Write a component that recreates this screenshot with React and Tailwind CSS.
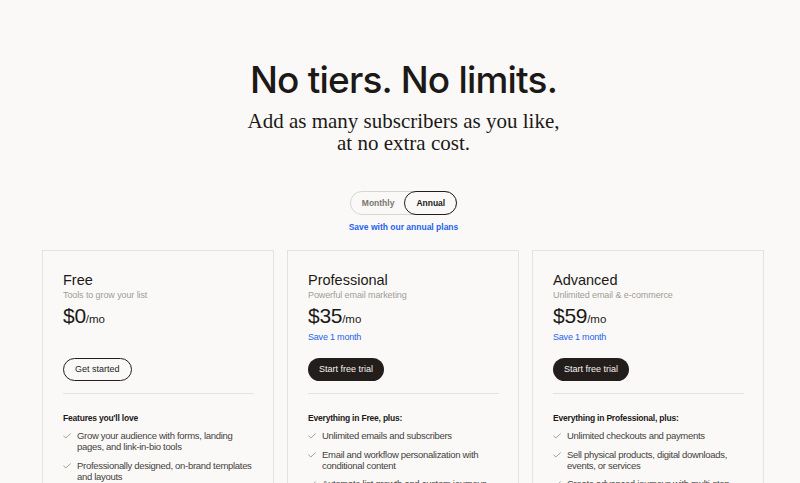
import React from 'react';

const plans = [
  {
    name: 'Free',
    tagline: 'Tools to grow your list',
    price: '$0',
    save: null,
    cta: 'Get started',
    primary: false,
    heading: "Features you'll love",
    features: [
      'Grow your audience with forms, landing pages, and link-in-bio tools',
      'Professionally designed, on-brand templates and layouts',
      'Send unlimited emails and broadcasts',
    ],
  },
  {
    name: 'Professional',
    tagline: 'Powerful email marketing',
    price: '$35',
    save: 'Save 1 month',
    cta: 'Start free trial',
    primary: true,
    heading: 'Everything in Free, plus:',
    features: [
      'Unlimited emails and subscribers',
      'Email and workflow personalization with conditional content',
      'Automate list growth and custom journeys',
    ],
  },
  {
    name: 'Advanced',
    tagline: 'Unlimited email & e-commerce',
    price: '$59',
    save: 'Save 1 month',
    cta: 'Start free trial',
    primary: true,
    heading: 'Everything in Professional, plus:',
    features: [
      'Unlimited checkouts and payments',
      'Sell physical products, digital downloads, events, or services',
      'Create advanced journeys with multi-step automations',
    ],
  },
];

const Check = () => (
  <svg width="8" height="6" viewBox="0 0 8 6" fill="none" className="mt-[3px] shrink-0">
    <path d="M0.6 2.8 L2.8 5 L7.4 0.8" stroke="#8f8b86" strokeWidth="0.8" strokeLinecap="round" strokeLinejoin="round" />
  </svg>
);

const PlanCard = ({ plan }) => (
  <div className="w-[232px] h-[240px] border border-[#e6e3df] bg-[#faf9f7] pl-[20px] pr-[19px] pt-[21px] overflow-hidden">
    <div className="text-[14.5px] leading-[16px] text-[#1c1917]">{plan.name}</div>
    <div className="text-[9px] leading-[12px] tracking-[-0.1px] text-[#a19d98] mt-[1px]">{plan.tagline}</div>
    <div className="flex items-baseline mt-[4px] text-[#1c1917]">
      <span className="text-[21px] leading-[22px] tracking-[-0.3px]">{plan.price}</span>
      <span className="text-[11.5px] leading-[14px]">/mo</span>
    </div>
    <div className="h-[12px] mt-[4px] text-[9px] leading-[12px] tracking-[-0.2px] text-[#2563eb]">{plan.save}</div>
    <div className="mt-[15px] flex">
      {plan.primary ? (
        <button className="h-[23px] px-[11px] rounded-full bg-[#231e1c] text-[#f5f3f0] text-[9px]">
          {plan.cta}
        </button>
      ) : (
        <button className="h-[23px] px-[11px] rounded-full border border-[#231e1c] text-[#231e1c] text-[9px]">
          {plan.cta}
        </button>
      )}
    </div>
    <div className="h-px bg-[#e6e3df] mt-[12px]" />
    <div className="mt-[18px] text-[8.5px] leading-[12px] tracking-[-0.2px] font-semibold text-[#1c1917]">
      {plan.heading}
    </div>
    <ul className="mt-[6px] flex flex-col gap-[7.5px]">
      {plan.features.map((f) => (
        <li key={f} className="flex gap-[6px] text-[9.5px] leading-[11px] tracking-[-0.3px] text-[#45413d]">
          <Check />
          <span>{f}</span>
        </li>
      ))}
    </ul>
  </div>
);

export default function App() {
  return (
    <div className="h-[483px] bg-[#faf9f7] overflow-hidden" style={{ fontFamily: '"Liberation Sans", Arial, sans-serif' }}>
      <div className="ml-[42px] w-[723px] pt-[58px]">
        <h1
          className="text-center text-[37px] leading-[44px] font-medium tracking-[-0.8px] text-[#1c1917]"
          style={{ fontFamily: 'Inter, "Noto Sans", sans-serif' }}
        >
          No tiers. No limits.
        </h1>
        <p
          className="text-center text-[21px] leading-[22px] text-[#1c1917] mt-[8px]"
          style={{ fontFamily: '"Liberation Serif", serif' }}
        >
          Add as many subscribers as you like,
          <br />
          at no extra cost.
        </p>
        <div className="flex justify-center mt-[37px]">
          <div className="flex items-center h-[24px] rounded-full border border-[#d9d6d2] bg-[#faf9f7]">
            <button className="h-[24px] pl-[11px] pr-[10px] text-[8.5px] font-semibold text-[#7a7671]">Monthly</button>
            <button className="h-[24px] px-[11px] -mr-px rounded-full border-[1.5px] border-[#231e1c] text-[8.5px] font-semibold text-[#1c1917]">
              Annual
            </button>
          </div>
        </div>
        <div className="text-center text-[8.5px] leading-[12px] text-[#2563eb] font-semibold mt-[6px]">
          Save with our annual plans
        </div>
        <div className="flex gap-[13px] mt-[17px]">
          {plans.map((p) => (
            <PlanCard key={p.name} plan={p} />
          ))}
        </div>
      </div>
    </div>
  );
}
